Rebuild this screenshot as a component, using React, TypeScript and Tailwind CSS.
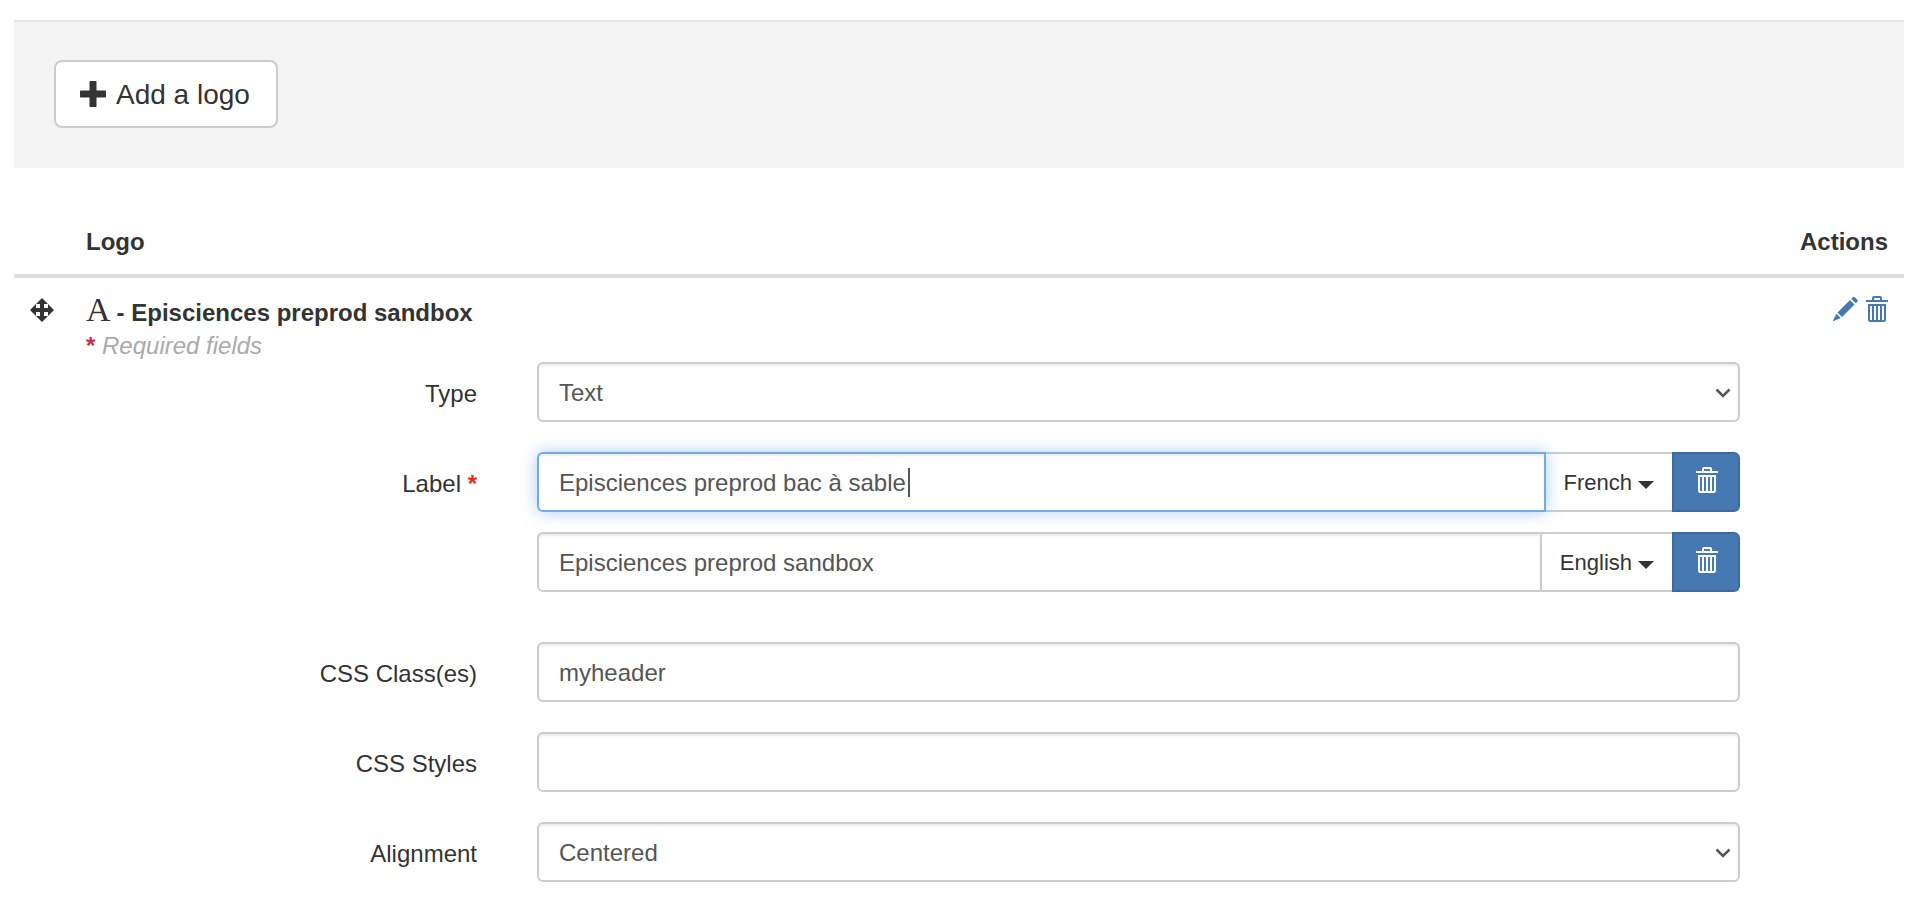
import type { ReactNode } from "react";

const field =
  "block h-[60px] w-full appearance-none rounded-md border-2 border-[#ccc] bg-white px-5 pt-0.5 text-2xl text-[#555] shadow-[inset_0_2px_2px_rgba(0,0,0,0.075)] outline-none";

function PlusIcon() {
  return (
    <svg viewBox="0 0 26 26" className="size-[26px] shrink-0" fill="currentColor" aria-hidden="true">
      <path d="M10.300 0h5.400q.8 0 .8.800v8.700h8.700q.8 0 .8.800v5.400q0 .8-.8.800h-8.700v8.700q0 .8-.8.800h-5.400q-.8 0-.8-.8v-8.700H.8q-.8 0-.8-.8v-5.400q0-.8.800-.8h8.700V.8q0-.8.800-.8z" />
    </svg>
  );
}

function MoveIcon() {
  return (
    <svg viewBox="0 0 24 24" className="size-6" fill="currentColor" aria-hidden="true">
      <path d="M12 0l6 6h-4v4h4V6l6 6-6 6v-4h-4v4h4l-6 6-6-6h4v-4H6v4l-6-6 6-6v4h4V6H6z" />
    </svg>
  );
}

function PencilIcon() {
  return (
    <svg viewBox="0 0 26 26" className="size-[26px]" fill="currentColor" aria-hidden="true">
      <path d="M19.200 2.800l1.600-1.600q1-.9 2 0l2.500 2.500q.9 1 0 2l-1.600 1.600zM18 4l4.500 4.500L10 21l-4.500-4.500zM4.500 17.700l4.300 4.300L0.500 25.500z" />
    </svg>
  );
}

function TrashIcon() {
  return (
    <svg viewBox="0 0 22 26" className="h-[26px] w-[22px]" fill="none" stroke="currentColor" strokeWidth="2" aria-hidden="true">
      <path d="M0 5h22M7 5V2q0-1 1-1h6q1 0 1 1v3M3 8v15.500q0 1.500 1.500 1.500h13q1.500 0 1.500-1.500V8M2 9h18" />
      <path d="M7 9v15M11 9v15M15 9v15" />
    </svg>
  );
}

function Row({ id, label, required, children }: { id: string; label: string; required?: boolean; children: ReactNode }) {
  return (
    <div className="grid grid-cols-4">
      <label htmlFor={id} className="pt-4 pr-[30px] text-right leading-8">
        {label}
        {required && <span className="font-bold text-[#f0281e]"> *</span>}
      </label>
      <div className="col-span-3 px-[30px]">{children}</div>
    </div>
  );
}

function SelectField({ id, options }: { id: string; options: string[] }) {
  return (
    <div className="relative">
      <select id={id} className={field}>
        {options.map((o) => (
          <option key={o}>{o}</option>
        ))}
      </select>
      <svg viewBox="0 0 16 10" className="pointer-events-none absolute top-[26px] right-[9px] h-2.5 w-4" fill="none" stroke="#555" strokeWidth="2.500" aria-hidden="true">
        <path d="M1.500 1.500L8 8l6.500-6.500" />
      </svg>
    </div>
  );
}

function LabelField({ id, value, language, active }: { id: string; value: string; language: string; active?: boolean }) {
  return (
    <div className="flex">
      <div className={active ? "relative z-10 flex-1" : "relative flex-1"}>
        <input
          id={id}
          aria-label={`Label (${language})`}
          defaultValue={value}
          className={
            active
              ? "block h-[60px] w-full rounded-l-md border-2 border-[#74abe6] bg-white px-5 pt-0.5 text-2xl text-[#555] shadow-[inset_0_2px_2px_rgba(0,0,0,0.075),0_0_16px_rgba(116,171,230,0.6)] outline-none"
              : "block h-[60px] w-full rounded-l-md border-2 border-[#ccc] bg-white px-5 pt-0.5 text-2xl text-[#555] shadow-[inset_0_2px_2px_rgba(0,0,0,0.075)] outline-none"
          }
        />
        {active && <span className="absolute top-4 left-[371px] h-[29px] w-0.5 bg-[#555]" />}
      </div>
      <button type="button" aria-haspopup="menu" className="-ml-0.5 flex h-[60px] items-center gap-1.5 border-2 border-[#ccc] bg-white px-[18px] pt-0.5 text-[22px]">
        {language}
        <svg viewBox="0 0 16 8" className="mt-1 h-2 w-4" fill="currentColor" aria-hidden="true">
          <path d="M0 0h16L8 8z" />
        </svg>
      </button>
      <button type="button" aria-label={`Delete ${language} label`} className="-ml-0.5 flex h-[60px] w-[68px] justify-center rounded-r-md border-2 border-[#3c6ba2] bg-[#4679b2] pt-[13px] pl-0.5 text-white">
        <TrashIcon />
      </button>
    </div>
  );
}

export default function App() {
  return (
    <main className="pt-5 pr-[18px] pl-3.5 font-['Liberation_Sans',Arial,sans-serif] text-2xl text-[#333]">
      <div className="border-t-2 border-[#e5e5e5] bg-[#f4f4f4] px-10 pt-[38px] pb-10">
        <button type="button" className="flex h-[68px] items-center gap-2.5 rounded-lg border-2 border-[#ccc] bg-white pr-[26px] pl-6 text-[28px]">
          <PlusIcon />
          <span className="pt-0.5">Add a logo</span>
        </button>
      </div>
      <table className="mt-10 w-full border-collapse">
        <thead>
          <tr className="border-b-4 border-[#ddd]">
            <th className="w-14" aria-label="Order" />
            <th className="px-4 pt-4 pb-3.5 text-left leading-9">Logo</th>
            <th className="w-[118px] pt-4 pr-4 pb-3.5 text-right leading-9">Actions</th>
          </tr>
        </thead>
        <tbody>
          <tr className="align-top">
            <td className="pt-5 pl-4">
              <MoveIcon />
            </td>
            <td className="px-4 pt-4">
              <h2 className="flex h-9 items-baseline gap-1.5 leading-7 font-bold">
                <span className="font-['Liberation_Serif',serif] text-[34px] leading-8 font-normal">A</span>
                <span>- Episciences preprod sandbox</span>
              </h2>
              <p className="text-[#aaa] italic leading-8">
                <span className="font-bold text-[#d02850] not-italic">*</span> Required fields
              </p>
              <form className="grid gap-[30px]" onSubmit={(e) => e.preventDefault()}>
                <Row id="type" label="Type">
                  <SelectField id="type" options={["Text", "Image"]} />
                </Row>
                <Row id="label-fr" label="Label" required>
                  <div className="mb-5 grid gap-5">
                    <LabelField id="label-fr" value="Episciences preprod bac à sable" language="French" active />
                    <LabelField id="label-en" value="Episciences preprod sandbox" language="English" />
                  </div>
                </Row>
                <Row id="css-class" label="CSS Class(es)">
                  <input id="css-class" defaultValue="myheader" className={field} />
                </Row>
                <Row id="css-styles" label="CSS Styles">
                  <input id="css-styles" className={field} />
                </Row>
                <Row id="alignment" label="Alignment">
                  <SelectField id="alignment" options={["Centered", "Left", "Right"]} />
                </Row>
              </form>
            </td>
            <td className="pt-[18px] pr-4">
              <div className="flex justify-end gap-2 text-[#4679b2]">
                <a href="#edit" aria-label="Edit logo">
                  <PencilIcon />
                </a>
                <a href="#delete" aria-label="Delete logo">
                  <TrashIcon />
                </a>
              </div>
            </td>
          </tr>
        </tbody>
      </table>
    </main>
  );
}
